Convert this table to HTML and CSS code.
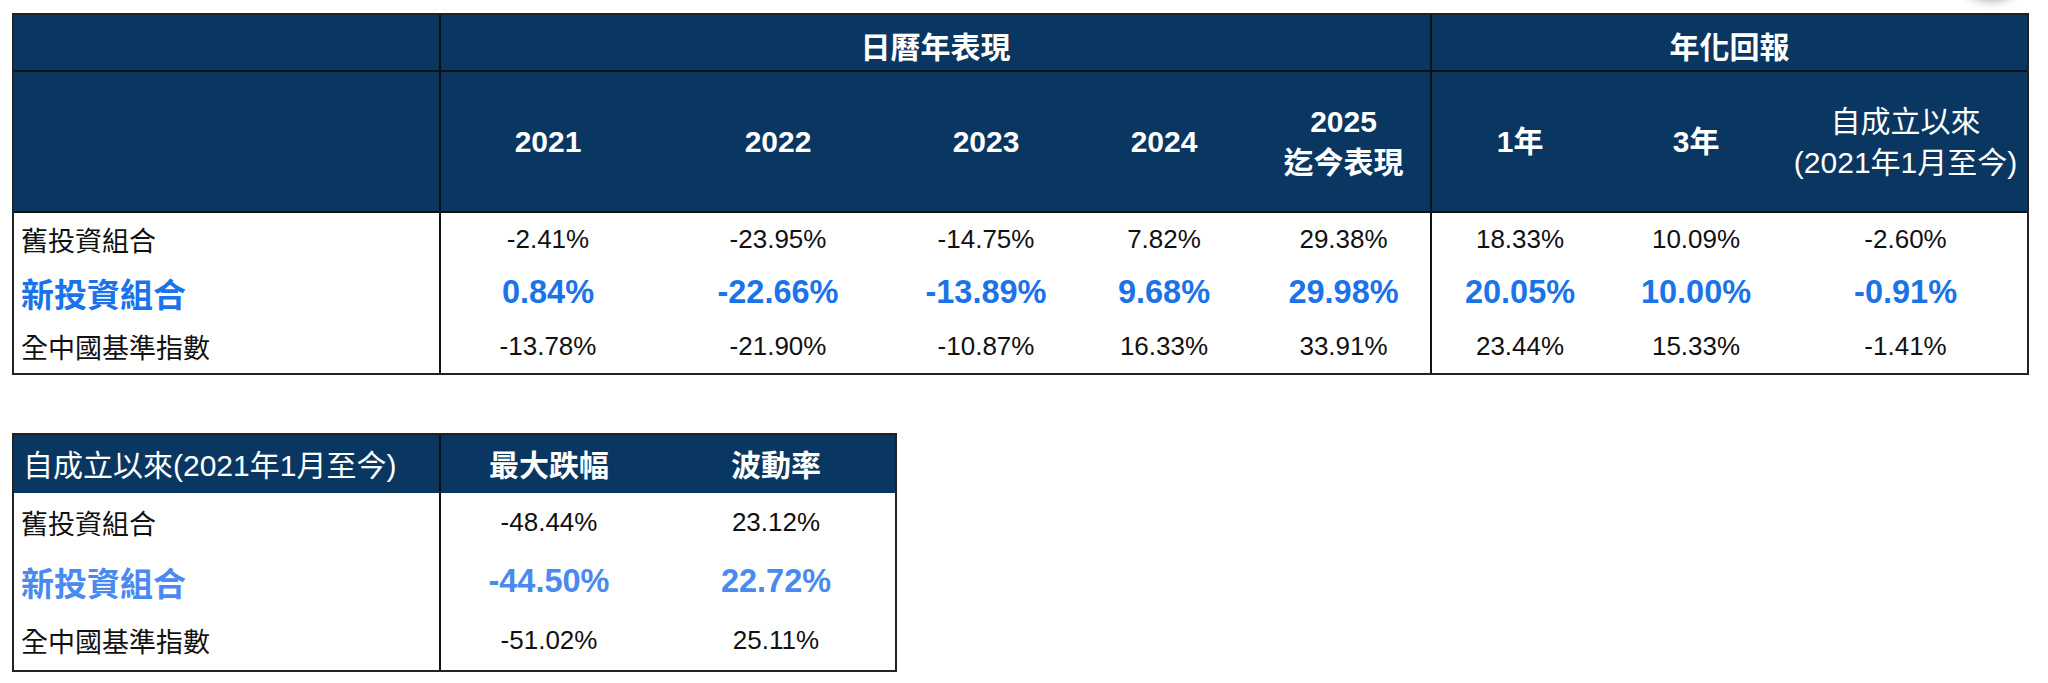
FILE: index.html
```html
<!DOCTYPE html>
<html lang="zh-Hant">
<head>
<meta charset="utf-8">
<title>投資組合表現</title>
<link rel="stylesheet" href="styles.css">
</head>
<body>
<div class="corner-shadow"></div>
<table class="perf">
  <colgroup>
    <col class="w-label"><col class="w-2021"><col class="w-2022"><col class="w-2023"><col class="w-2024"><col class="w-2025"><col class="w-1y"><col class="w-3y"><col class="w-inc">
  </colgroup>
  <thead>
    <tr class="hr1">
      <th class="head"></th>
      <th class="head group div" colspan="5">日曆年表現</th>
      <th class="head group div" colspan="3">年化回報</th>
    </tr>
    <tr class="hr2">
      <th class="head"></th>
      <th class="head div">2021</th>
      <th class="head">2022</th>
      <th class="head">2023</th>
      <th class="head">2024</th>
      <th class="head">2025<br>迄今表現</th>
      <th class="head div">1年</th>
      <th class="head">3年</th>
      <th class="head light">自成立以來<br>(2021年1月至今)</th>
    </tr>
  </thead>
  <tbody>
    <tr class="br">
      <td class="label">舊投資組合</td>
      <td class="num div">-2.41%</td><td class="num">-23.95%</td><td class="num">-14.75%</td><td class="num">7.82%</td><td class="num">29.38%</td>
      <td class="num div">18.33%</td><td class="num">10.09%</td><td class="num">-2.60%</td>
    </tr>
    <tr class="br hl">
      <td class="label">新投資組合</td>
      <td class="num div">0.84%</td><td class="num">-22.66%</td><td class="num">-13.89%</td><td class="num">9.68%</td><td class="num">29.98%</td>
      <td class="num div">20.05%</td><td class="num">10.00%</td><td class="num">-0.91%</td>
    </tr>
    <tr class="br last">
      <td class="label">全中國基準指數</td>
      <td class="num div">-13.78%</td><td class="num">-21.90%</td><td class="num">-10.87%</td><td class="num">16.33%</td><td class="num">33.91%</td>
      <td class="num div">23.44%</td><td class="num">15.33%</td><td class="num">-1.41%</td>
    </tr>
  </tbody>
</table>

<table class="risk">
  <colgroup>
    <col class="w-label"><col class="w-dd"><col class="w-vol">
  </colgroup>
  <thead>
    <tr class="rh">
      <th class="head light left">自成立以來(2021年1月至今)</th>
      <th class="head div">最大跌幅</th>
      <th class="head">波動率</th>
    </tr>
  </thead>
  <tbody>
    <tr class="rb">
      <td class="label">舊投資組合</td>
      <td class="num div">-48.44%</td><td class="num">23.12%</td>
    </tr>
    <tr class="rb hl2">
      <td class="label">新投資組合</td>
      <td class="num div">-44.50%</td><td class="num">22.72%</td>
    </tr>
    <tr class="rb">
      <td class="label">全中國基準指數</td>
      <td class="num div">-51.02%</td><td class="num">25.11%</td>
    </tr>
  </tbody>
</table>
</body>
</html>
```

FILE: styles.css
```css
html, body {
  background: #ffffff;
}
body {
  margin: 0;
  padding: 13px 12px;
  position: relative;
  font-family: "Liberation Sans", "Noto Sans CJK TC", sans-serif;
  color: #111111;
}

.corner-shadow {
  position: absolute;
  left: 1960px;
  top: -44px;
  width: 62px;
  height: 44px;
  border-radius: 50%;
  background: #ffffff;
  box-shadow: 0 2px 9px rgba(0, 0, 0, 0.28);
}

table {
  table-layout: fixed;
  border-collapse: separate;
  border-spacing: 0;
  border: 2px solid #222222;
}
th, td {
  box-sizing: border-box;
  padding: 0;
  vertical-align: middle;
  text-align: center;
}

.perf { width: 2017px; }
.w-label { width: 425px; }
.w-2021 { width: 216px; }
.w-2022 { width: 246px; }
.w-2023 { width: 170px; }
.w-2024 { width: 186px; }
.w-2025 { width: 173px; }
.w-1y { width: 178px; }
.w-3y { width: 176px; }
.w-inc { width: 243px; }

.head {
  background: #0a3761;
  color: #ffffff;
  font-size: 30px;
  font-weight: 700;
  line-height: 41px;
}
.head.light { font-weight: 400; }
.head.left { text-align: left; padding-left: 9px; }

.div { border-left: 2px solid #111111; }

.hr1 { height: 57px; }
.hr1 .head {
  border-bottom: 2px solid #111111;
  padding-top: 9px;
}
.hr2 { height: 141px; }
.hr2 .head { border-bottom: 2px solid #111111; }

.br { height: 53px; }
.br.last { height: 54px; }

.label {
  text-align: left;
  padding-left: 7px;
  font-size: 27px;
}
.num {
  font-size: 26px;
}

.hl .label { font-size: 33px; font-weight: 700; color: #1a73e8; }
.hl .num { font-size: 32.5px; font-weight: 700; color: #1a73e8; }

.risk {
  width: 885px;
  margin-top: 58px;
}
.w-dd { width: 218px; }
.w-vol { width: 238px; }
.rh { height: 58px; }
.rh .head { padding-top: 2px; }
.rb { height: 59px; }

.hl2 .label { font-size: 33px; font-weight: 700; color: #4a89ee; }
.hl2 .num { font-size: 32.5px; font-weight: 700; color: #4a89ee; }
```
